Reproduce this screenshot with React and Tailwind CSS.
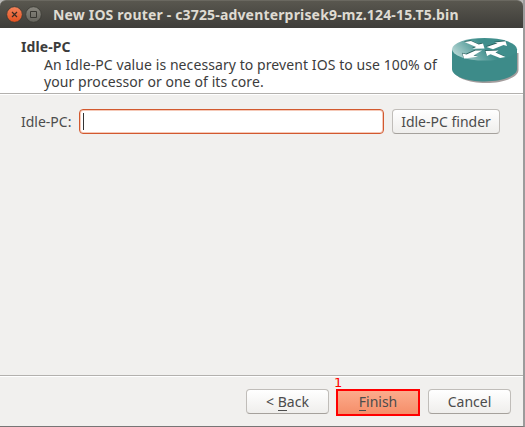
function RouterIcon() {
  return (
    <svg className="block h-[48px] w-[68px]" viewBox="0 0 68 48">
      <defs>
        <linearGradient id="top" x1="0" y1="0.6" x2="0.75" y2="0.35">
          <stop offset="0" stopColor="#b5d6d4" />
          <stop offset="0.4" stopColor="#6ba9a7" />
          <stop offset="0.7" stopColor="#3f8e8c" />
        </linearGradient>
        <g id="arrows">
          <path d="M13.500 4L20 3L27.700 6.500L32 5.500L33.500 10.500L21.500 10.700L25 9Z" />
          <path d="M35.500 9L46.500 5.300L43.500 4.500L54.500 3.200L56 8L52.500 7L42 11.200Z" />
          <path d="M31 12.500L22.500 17.500L27 18.800L13 20.500L11.500 15.500L15.500 16.500L24.500 12.500Z" />
          <path d="M34.500 13L47.500 12.500L44.500 14.500L54.500 19L49 20L39.500 16.300L36 18Z" />
        </g>
      </defs>
      <path d="M2.500 13v19c0 7 14.500 13 32.500 13s32.500-6 32.500-13V15z" fill="#a39d9d" />
      <path d="M1 11v20c0 7 14.500 12.500 32.500 12.500S66 38 66 31V11z" fill="#3d8b89" />
      <ellipse cx="33.500" cy="11.300" rx="32.500" ry="11.300" fill="url(#top)" />
      <use href="#arrows" fill="#285f5d" transform="translate(-0.6 -0.8)" />
      <use href="#arrows" fill="#fff" />
    </svg>
  );
}

function Button({ className, children }) {
  return (
    <button
      className={`flex h-[25px] shrink-0 items-center justify-center rounded-[4px] border border-[#c0bdb9] border-b-[#a5a19c] bg-linear-to-b from-white to-[#efeeec] whitespace-nowrap ${className}`}
    >
      {children}
    </button>
  );
}

function Mnemonic({ children }) {
  return <span className="inline-block border-b border-[#4c4c4c] leading-[17px]">{children}</span>;
}

export default function App() {
  return (
    <div className="flex h-[427px] w-[525px] flex-col overflow-hidden border-r-2 border-b border-r-[#9b9b9b] border-b-[#777575] bg-[#f1f0ee] font-['Noto_Sans','Open_Sans',sans-serif] text-[14px] leading-[18px] text-[#4c4c4c]">
      <div className="bg-[#b9b8b6]">
        <header className="flex h-[28px] items-center rounded-t-[6px] border-t border-[#6a6860] bg-linear-to-b from-[#59574f] to-[#3e3d39] pl-[6px]">
          <svg className="block h-[18px] w-[36px] shrink-0" viewBox="0 0 36 18">
            <defs>
              <linearGradient id="close" x1="0" y1="0" x2="0" y2="1">
                <stop offset="0" stopColor="#f4845c" />
                <stop offset="1" stopColor="#e4511f" />
              </linearGradient>
              <linearGradient id="max" x1="0" y1="0" x2="0" y2="1">
                <stop offset="0" stopColor="#89877f" />
                <stop offset="1" stopColor="#65645d" />
              </linearGradient>
            </defs>
            <circle cx="8.500" cy="8.500" r="7.800" fill="url(#close)" stroke="#393832" strokeWidth="0.800" />
            <path d="M6 6l5 5M11 6l-5 5" stroke="#3b2b23" strokeWidth="1.200" />
            <circle cx="27.500" cy="8.500" r="7.800" fill="url(#max)" stroke="#393832" strokeWidth="0.800" />
            <path d="M24.500 5.500h6v6h-6z" fill="none" stroke="#373631" />
          </svg>
          <h1 className="ml-[11px] text-[14px] font-bold tracking-[0.17px] whitespace-nowrap text-[#dfdbd2]">
            New IOS router - c3725-adventerprisek9-mz.124-15.T5.bin
          </h1>
        </header>
      </div>

      <section className="flex h-[65px] shrink-0 justify-between bg-white pt-[10px] pr-[4px] pl-[21px] text-[#3c3c3c]">
        <div className="whitespace-nowrap">
          <h2 className="leading-[18px] font-bold tracking-[0.1px]">Idle-PC</h2>
          <p className="pl-[23px] leading-[17px] tracking-[0.08px]">
            An Idle-PC value is necessary to prevent IOS to use 100% of
            <br />
            your processor or one of its core.
          </p>
        </div>
        <RouterIcon />
      </section>

      <main className="flex-1 border-t border-[#b3b1ae]">
        <div className="flex items-center border-t border-white pt-[14px] pl-[21px]">
          <label className="w-[58px] whitespace-nowrap">Idle-PC:</label>
          <div className="flex h-[25px] w-[305px] items-center rounded-[4px] border border-[#d2592f] bg-white pl-[3px] shadow-[inset_0_0_0_1px_#f5c9b8]">
            <span className="h-[17px] w-px bg-[#333]" />
          </div>
          <Button className="ml-[8px] w-[108px]">Idle-PC finder</Button>
        </div>
      </main>

      <footer className="h-[51px] shrink-0 border-t border-[#b3b1ae]">
        <div className="flex items-start border-t border-white pt-[12px] pl-[246px]">
          <Button className="w-[83px]">
            &lt;&nbsp;<Mnemonic>B</Mnemonic>ack
          </Button>
          <div className="relative ml-[7px]">
            <span className="absolute -top-[14px] -left-[2px] font-['DejaVu_Sans',sans-serif] text-[13px] leading-[16px] text-[#f00]">
              1
            </span>
            <button className="flex h-[27px] w-[84px] items-center justify-center border-2 border-[#f00] bg-linear-to-b from-[#fcab8c] to-[#f58e69] pb-px">
              <Mnemonic>F</Mnemonic>inish
            </button>
          </div>
          <Button className="ml-[8px] w-[83px]">Cancel</Button>
        </div>
      </footer>
    </div>
  );
}
